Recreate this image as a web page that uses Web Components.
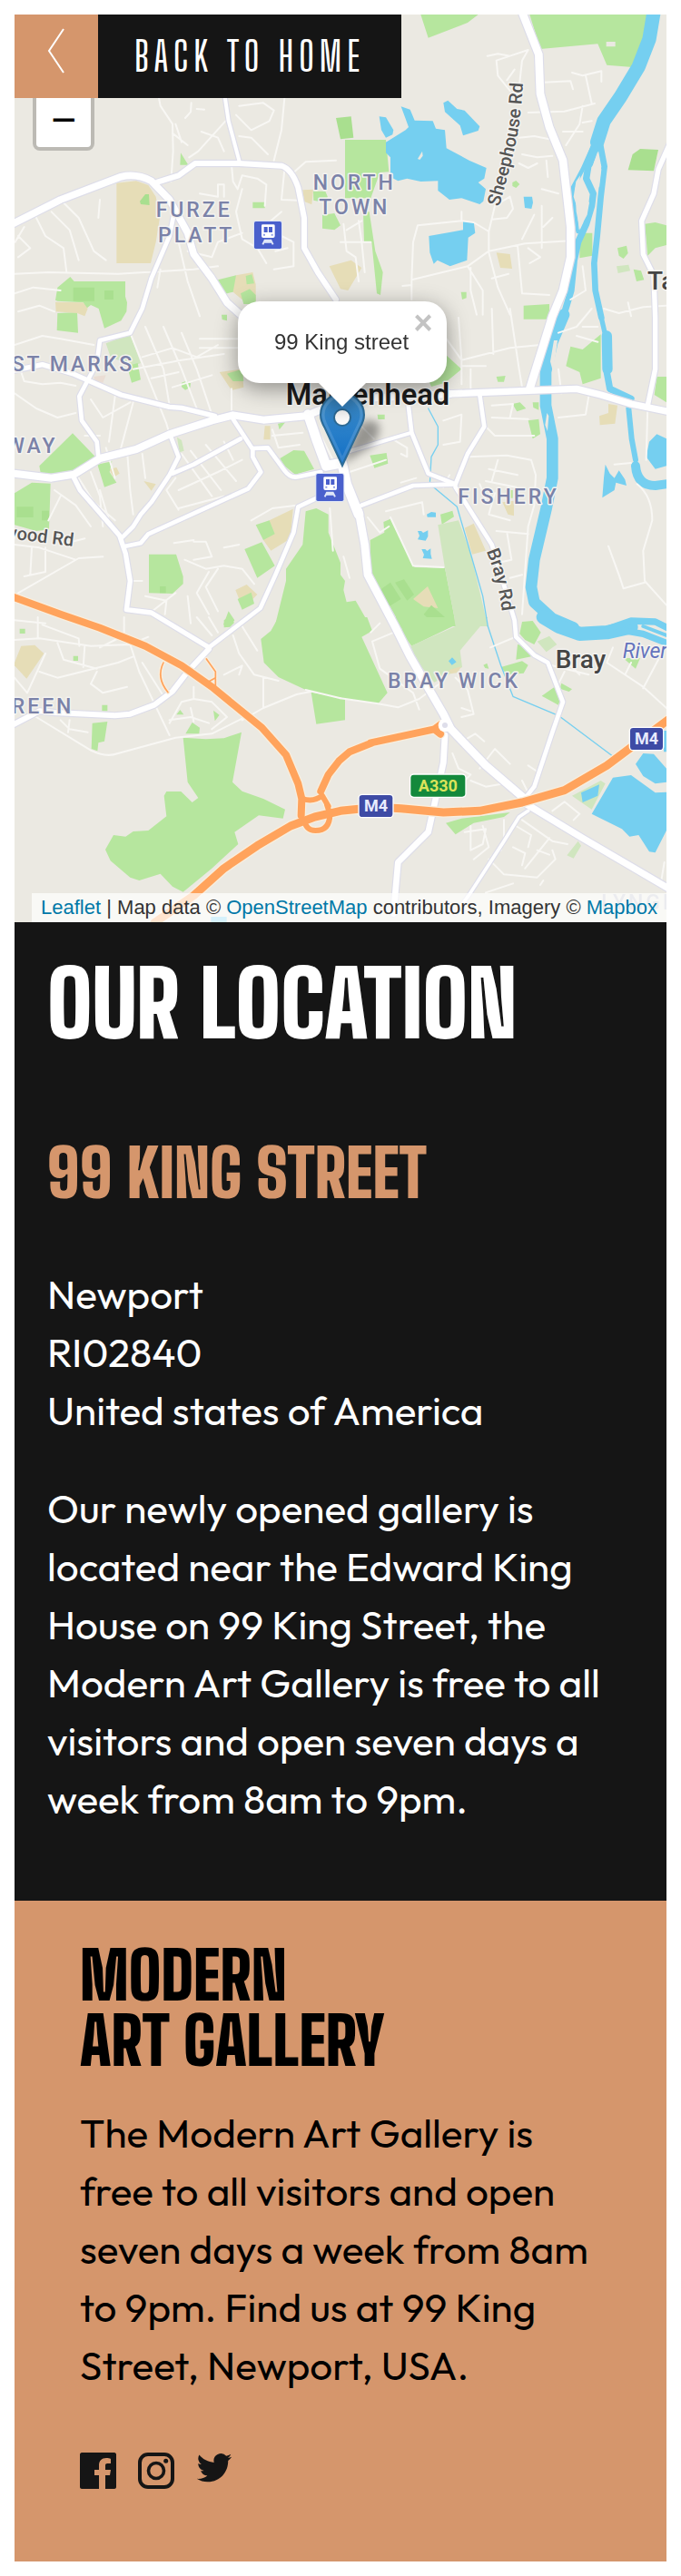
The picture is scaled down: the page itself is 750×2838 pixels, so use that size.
<!DOCTYPE html>
<html lang="en">
<head>
<meta charset="utf-8">
<meta name="viewport" content="width=device-width, initial-scale=1">
<title>Modern Art Gallery – Our location</title>
<style>
  :root {
    --ink: #151515;
    --accent: #d5966c;
    --display: "Big Shoulders Display", "Big Shoulders", "Liberation Sans Narrow", sans-serif;
    --body: "Outfit", Lato, sans-serif;
  }
  body { margin: 16px; background: #fff; font-family: "Outfit", Lato, sans-serif; }
</style>
</head>
<body>
<location-page></location-page>

<script>
/* Map geometry is kept in tiles; each tile has its own origin in map units (3 units = 1px). */
const TILES = { A: [0, 0], B: [1125, 0], C: [0, 1020], D: [1125, 1020], E: [0, 2040], F: [1125, 2040] };
const at = (t, body) => `<g transform="translate(${TILES[t][0]} ${TILES[t][1]})">${body}</g>`;

const AREAS = [
  ['green', 'A', 'M183 992L190 950 232 915 245 930 414 930 414 980 420 1000 418 1030 400 1060 345 1085 326 1020 300 1008 285 1020 275 1000 190 995ZM190 1035L255 1032 258 1100 188 1092ZM597 505L622 545 595 545ZM835 668h40v20h-40zM1035 632l40 0 8 20-25 15-22-5zM1065 710l40-5 20 40-20 15-40-5zM720 925L780 910 795 945 770 965 730 975Z'],
  ['tan', 'A', 'M385 605L450 598 490 612 515 650 528 720 515 800 498 870 385 870ZM1000 628l35-2-5 50-25-10zM780 910L835 900 845 940 845 995 800 990 770 965ZM1088 880L1160 860 1195 885 1150 960 1125 955ZM183 998L275 1000 290 1020 280 1045 255 1035 185 1030Z'],
  ['green', 'A', 'M812 912l20-5 8 30-25 3zM795 970l30-15 20 20 0 30-40 0z'],
  ['dark', 'A', 'M462 665L480 642 492 642 494 678 465 675ZM242 950h70v45h-70zM345 960h30v30h-30zM1110 390L1160 385 1168 455 1125 460Z'],
  ['green', 'B', 'M265 48L455 48 420 75 290 125ZM625 48H1012L1000 150 965 222 880 215 850 145 660 162ZM15 462L150 462 160 568 130 570 100 655 15 655ZM75 700L95 700 115 830 140 900 132 975 120 970 103 800 78 800ZM1005 740L1040 735 1077 745V810L1040 820 1015 845ZM915 820l30-8 5 25-15 18-15-10zM968 890l25 5 10 30-25 5zM790 770h42v75l-42 8zM605 1010L690 1005 690 1055 605 1055ZM568 603l12-6 12 12-12 12-12-6zM398 965l18 0 0 20-14 5z'],
  ['dark', 'B', 'M950 562L965 510 990 492 1050 495 1035 565Z'],
  ['pale', 'B', 'M912 880l40-5 5 20-40 8z'],
  ['tan', 'B', 'M515 835L560 840 567 888 528 885Z'],
  ['water', 'B', 'M150 470L215 430 225 420 200 352 230 362 245 398 305 400 315 425 345 430 350 490 425 530 482 555 475 590 455 603 480 625 472 665 460 675 400 655 360 660 322 630 322 598 265 600 220 590 190 598 165 585 165 520 150 505ZM128 385L150 388 175 430 172 445 150 455 135 430ZM340 340L355 332 385 360 410 365 460 418 455 432 405 448 395 415 345 370ZM292 780L405 760 405 732 440 732 445 770 422 785 418 860 362 880 320 860 308 872 295 835ZM605 650h28l3 20-5 20-22-3z'],
  ['land', 'B', 'M255 525L270 500 272 515 262 528ZM878 138h30v16h-30z'],
  ['pale', 'C', 'M350 115L430 85 465 180 440 190 365 160ZM585 425l15 10 8 35-15 5z'],
  ['pink', 'C', 'M310 225l40-5-10 25-25 0z'],
  ['tan', 'C', 'M725 210L800 200 805 260 765 270ZM360 530l25-5 10 20-20 12zM475 570L515 580 500 602ZM890 700L968 662 960 760 895 800 870 765ZM778 930L815 912 850 945 830 965 790 960ZM875 388h18v45h-22z'],
  ['green', 'C', 'M420 190L455 180 465 235 435 245ZM600 245l15-6 15 8-2 14-16 8-12-10zM750 215L800 200 805 240 770 240ZM130 520L240 412 315 490 240 540 135 548ZM322 515L370 505 362 540 385 575 345 590ZM48 610L105 575 167 578 162 730 120 735 48 715ZM492 812H582L605 885 605 910 570 942 492 940ZM845 715L890 700 908 745 870 765ZM808 795L865 772 908 850 850 890ZM785 960L830 938 840 975 800 995ZM738 1045L755 1000 775 1030 760 1050ZM925 495L970 468 1005 470 1038 530 975 548 940 520ZM1010 670L1045 660 1085 680 1085 740 1125 840 1125 1050 908 1050 945 900 945 860 1000 780ZM918 380l25-5-20 25zM732 20l18 0 0 20-16-4z'],
  ['dark', 'C', 'M55 655h55v35h-55zM138 668h24v32h-24zM528 918h20v22h-20z'],
  ['green', 'D', 'M745 190L760 125 800 135 860 85 860 230 800 250 790 210ZM1045 225h32v85l-40-25zM620 370l35-5 5 50-25 15zM568 315l25-5 20 20-30 10zM635 310h20v25l-18-8zM515 225l30-3-5 20-20 0zM97 485l55-8 5 35-45 15zM98 765L145 740 142 705 165 695 245 855 345 857 382 1050 200 1050 150 960 100 880ZM330 680l40-12 5 20-40 25zM345 150L400 200 370 225 345 245 300 258 290 235 340 190ZM0 880L15 900 10 930 20 970 50 965 90 1035 0 1035ZM122 350h24v16h-22zM545 600h24v26h-22z'],
  ['pale', 'D', 'M322 715L390 700 430 810 487 1050 382 1050 345 857Z'],
  ['tan', 'D', 'M410 725L440 710 480 800 435 812ZM240 960L288 918 322 990 275 985ZM855 355l30-10 0-30 30 5-8 60-50 5zM535 640l38-5 0 50-20-5z'],
  ['dark', 'D', 'M130 930L165 905 200 960 160 985ZM180 905L210 895 243 945 220 965ZM275 1010L300 980 345 1020 310 1045Z'],
  ['water', 'D', 'M1020 440L1045 415 1077 430V520L1040 530 1010 490ZM875 515L890 545 905 560 920 535 940 565 945 585 910 575 905 600 865 625 870 560ZM285 680l15-8 15 2 0 15-28 0zM255 735h12l6 6 16-8v20l-8 14-26-4 6-12zM268 795h12l6 6 12-8v18l4 16-30-2 4-12z'],
  ['green', 'E', 'M920 0H1127V268L1010 240 920 198 872 150 862 72 895 45ZM1028 248L1140 268V340L1045 353ZM605 398L680 403 740 400 798 380 768 545 800 575 870 600 942 635 935 665 855 655 775 710 787 750 700 830 605 908 570 890 530 848 460 870 430 860 365 805 348 768 375 720 415 725 440 708 490 705 550 658 542 590 550 576 598 576 635 612 655 597 620 545ZM65 38h18v16h-18zM242 128h16v16h-16zM337 290h18v20h-18zM305 350L355 345 345 410 325 415 322 442 302 435ZM613 385L635 348 660 365 658 385ZM583 322l12-16 12 16zM705 308l20 15-15 20zM740 10l18-12 16 20-14 14-20 2z'],
  ['tan', 'E', 'M48 150L70 95 115 92 145 120 88 203 48 160Z'],
  ['water', 'E', 'M697 990h52v20h-52z'],
  ['green', 'F', 'M0 0H88L105 45 70 65 155 250 125 285 0 268ZM165 0L375 0 382 25 235 95ZM600 15L635 12 662 50 640 90 610 75 592 55ZM585 90l25 5 20 35-50 10zM530 165L600 145 620 158 605 185 550 190ZM665 260L715 225 732 250 720 290ZM730 218l35 20-10 8-30-10zM348 680L400 665 560 645 540 660 440 680 380 718ZM940 135l50 0-15 35-35-30zM472 158l12-6 6 18-12-2z'],
  ['pale', 'F', 'M232 95L380 30 375 0 487 0 395 110 402 165 310 215 255 150ZM650 80L690 62 715 90 680 115ZM765 590L860 540 875 550 830 635 800 615ZM785 740l10 15-25 42-22-10z'],
  ['tan', 'F', 'M358 175l40-12-10 20-25 4z'],
  ['water', 'F', 'M830 650L900 530 960 522 1040 580 1077 578V705L1040 778 1020 775 985 720 955 725 930 700ZM975 485L1000 450 1035 452 1077 500V545L1040 550 1000 525ZM795 580L855 553 850 590 800 612ZM1068 375h9v70h-9zM357 145l12-12 14 15-15 10z'],
];

const RIVERS = [
  ['B', 46, 'M1035 40L1020 130 985 220 925 320 870 400 848 470'],
  ['B', 14, 'M840 470L800 560 768 620 772 700 785 765'],
  ['B', 30, 'M848 470L820 540'], ['B', 22, 'M820 540L812 590 835 640 830 680 812 740 785 800 772 860 762 960 735 1050'],
  ['B', 20, 'M855 460L872 550 860 650 848 780 838 870 842 960 862 1050'],
  ['D', 38, 'M738 20L700 110 678 210 678 320 700 430 700 560 680 660 640 830 630 920 640 970 700 1025 770 1055'],
  ['F', 46, 'M670 0L720 30 790 55 880 50 960 32'], ['F', 22, 'M880 40L960 12 1040 15 1090 40'], ['F', 22, 'M940 45L1000 55 1090 90'],
  ['F', 12, 'M1000 30L1077 60'],
  ['D', 16, 'M855 0L880 110'], ['D', 34, 'M880 90L882 200'], ['D', 22, 'M878 200L890 265 960 298'],
  ['D', 18, 'M952 330L962 430 975 500'], ['D', 30, 'M975 520Q980 585 1040 585L1090 578'],
  ['D', 4, 'M290 330L322 390 322 450 300 490 295 580 385 655 430 810 470 950 487 1050'],
  ['F', 4, 'M487 30L530 160 570 262 720 325 900 460'],
];
const ISLES = [['B', 'M850 500L862 560 855 620 838 590 836 540ZM792 580L785 640 780 680 770 650 778 600ZM800 640L822 670 815 710 788 760 782 700Z'], ['D', 'M705 105l12 0-8 60-8 40-8-30zM682 345l6 10-4 50-8-20z']];

/* Side streets */
const STREETS = [
  ['A', 'M525 324L530 350 570 410 572 500 565 600M745 400L655 500 625 520M580 410L600 470M570 440L620 480M665 435L720 455 740 500M632 340L630 370 612 390M650 360L675 362M790 350L870 340 905 365 890 400 830 430 800 400 780 380M940 324L930 430 905 530M790 450L830 455 885 510M765 545L770 600 785 625 800 580 850 590 880 610 875 680M800 625L780 700 800 790 850 820 880 870M905 890L970 880 970 800 930 780M940 560L930 660 985 662M970 570L1010 535 1110 530M48 905L160 900 390 905 640 890 720 880M110 700L150 780 210 820 220 900M60 780L100 820 60 850M200 660L260 720 310 830 350 860M170 700L230 760 260 860M330 660L325 720M590 800L620 930 660 1045M620 830L700 850 720 800 800 770M530 890L520 950M660 640L720 650 720 610 740 610 740 650M48 970L110 950 200 960M60 1030L130 1010 180 1030M80 750L50 800M860 760L930 700M910 830L950 820'],
  ['B', 'M485 185L520 178 560 185 620 165 600 200 590 290M560 185L515 200 520 250 560 300M575 230L550 265M670 272L760 268 768 295M765 240L800 250 862 235 862 270M810 250L830 342M620 372L740 368 840 342M800 350L790 410 745 480M735 435L800 435M800 405L830 400M590 455L640 450 690 460M600 510L650 520 700 515M680 530L685 585M665 625L720 640M590 540L620 555 650 540M235 925L240 800 255 745 400 730 440 735 490 765 510 680 560 650 570 690 550 720 500 725M490 765L490 830 420 880 235 925M490 830L610 805 770 795M420 880L470 960 470 1040M430 885L430 960 450 1040M490 835L520 950 560 1040M585 810L600 970 690 975M665 680L665 820M640 710L600 790M620 820L660 850 625 870M700 720L670 750M10 740L20 830 50 850 60 930M60 730L70 800 80 900M20 760L70 730M0 800L100 800M870 1020L920 1035 1000 1015 1075 1010M800 880L810 960 760 990M950 1000L960 1045M400 700L400 730M500 920L555 905M235 930L235 990M205 945L235 942'],
  ['C', 'M48 120L140 90 200 100 310 120M60 180L80 240 140 250 200 245 250 255M48 280L120 330 190 360 250 345M430 80L490 230 550 380 560 415M480 60L540 200 560 320M540 60L600 200 650 330M600 80L650 200 700 350M470 160L570 130 650 160 720 120M440 200L600 170 740 150M660 100L790 100M660 130L800 130M570 260L700 220M500 230L590 210M765 265L765 340M380 290L360 440M440 310L400 460M300 300L340 360 430 310M280 420L330 420M420 470L430 600 440 680M470 480L480 560M600 480L700 620M630 470L730 600M680 450L780 570M590 600L720 540 800 500M590 660L740 620M580 560L550 600 590 665M300 540L330 620 340 720M260 560L310 640 380 700M180 600L250 650 300 720M330 600L360 700M48 780L130 790 250 830M60 940L260 825 340 820M105 790L100 880M150 790L150 870 80 885M640 770L680 770 700 820 640 830M575 775L640 765M610 830L680 860 740 850 800 860 840 910M690 870L650 940 690 1010M720 860L680 920 720 1000M620 950L630 1040M490 1010L580 940M430 900L470 900M830 700L900 660 980 650M740 790L790 780M900 400L920 460 990 450M900 420L1000 410M740 440L770 500M350 460L380 560M1090 660L1100 800M1050 400L1100 500M480 950L550 965 545 1010M48 1030L150 1040M200 620L160 700M280 760L200 780'],
  ['D', 'M390 30L400 170 400 250M350 100L400 170 560 130 660 120M500 0L505 150M560 0L590 200 600 260M400 190L480 190M430 270L430 200M340 370L400 350 395 440 340 450M500 320L570 315 560 360M500 360L620 365M480 390L510 420 640 420M420 490L550 485 630 500 645 550 640 650 620 720 600 1010M490 530L585 550M480 570L580 590M460 580L480 630M520 500L500 570M510 610L490 680 560 700M515 735L620 745M550 740L565 830 520 840M560 890L600 880M905 515L960 510M980 580Q1030 620 1030 700L1000 800 1005 900 1077 980M1005 905L935 925 920 880 885 785M1015 320L1010 500M720 360L810 350 820 290M720 200L730 280M720 80L780 60 830 0M30 540L150 500M170 430L220 460 220 490 200 480M200 575L250 560M165 690L240 850 340 855M150 670L270 640 275 680M90 690L130 740 160 720M10 820L30 890M340 590L360 550M60 380L110 430M780 90L850 110M800 60L850 60'],
  ['E', 'M48 75L130 70 300 95 430 90 490 65M125 0L125 70M140 25L260 70 262 95M410 0L410 60 330 100M190 85L210 140 320 170M130 180L190 200 390 150 440 130M280 95L275 165M430 90L460 180 560 390M470 150L540 260M320 180L300 220 340 250 420 230M90 250L150 120M48 200L90 250M120 330L300 440Q350 465 390 450L580 398 700 385 800 335M200 340L230 370 290 380M230 340L225 380M640 230L640 270 600 280 560 350M640 270L700 280 750 330 700 370M560 340L630 330 690 350M630 300L640 345M770 60L790 120 840 190 920 210M800 30L850 110M870 200L870 300 980 255 1030 245M740 190L800 160 790 190M870 300L800 340M650 0L700 60M690 0L720 50M1010 240L1125 268'],
  ['F', 'M0 268L120 285 190 298 260 270 340 210M105 80L200 40M105 80L130 170 240 250 260 305M130 20L100 50M495 100L590 60M380 200L420 240 440 320 400 330M400 300L430 310M420 400L445 385 475 410M370 450L390 500 430 520 400 550M460 500L510 435 560 485M430 540L480 560 540 550M600 540L620 580M620 490L650 510M740 180L720 220M700 160L820 190M750 150L790 190M880 150L1000 230 1077 300M900 100L880 150M1000 235L1050 140M940 190L960 150M430 690L430 770 470 750 480 700 410 710M470 690L490 760 440 800M540 670L540 730M580 690L630 720 620 760M600 670L700 740 750 750M690 730L610 830M490 800L540 850 650 860 710 800 700 770M570 760L610 780 600 820M500 790L530 770M650 770L690 785M700 640L740 610 790 650 770 670M670 870L660 885M1070 810L1060 870M480 910L570 880'],
];

/* Main roads: tile, width, path */
const ROADS = [
  ['A', 12, 'M740 300L755 400 790 530'],
  ['A', 14, 'M578 690L560 780 500 920 470 1020 430 1100 330 1125 320 1200'],
  ['A', 18, 'M520 602L590 580 645 540 790 540 930 548Q965 560 985 620L1005 720 1005 820 1050 900 1110 990'],
  ['A', 23, 'M30 746L200 660 400 584Q450 572 500 598L560 660 620 770 640 840 700 920 750 1000 800 1045'],
  ['B', 16, 'M1090 470L1050 560 1035 640 995 730 1000 840 1035 910 1040 1050 1040 1220 1015 1340'],
  ['B', 26, 'M600 40L655 180 660 310 690 420 735 530 760 750 760 850 735 960 700 1045 625 1285'],
  ['C', 14, 'M320 180L262 290 270 370 320 440 325 490'],
  ['C', 16, 'M30 208L140 185 240 215 400 285 560 325 600 328 710 355'],
  ['C', 14, 'M770 365L835 465 835 490 862 540 820 595 490 745 465 775 415 785'],
  ['C', 14, 'M835 462L885 460 940 535Q960 562 985 556L1060 540'],
  ['C', 14, 'M565 425L590 490 560 550 500 640 465 680 440 720 405 755'],
  ['C', 14, 'M570 545L640 515 795 430'],
  ['C', 16, 'M242 555L265 600 395 750 415 810 430 900 418 995 500 1005 690 1120'],
  ['C', 14, 'M1060 620L985 655 970 740 910 880 860 990 690 1120'],
  ['E', 18, 'M690 105L620 180 570 245 510 290 430 320 380 325 180 315 130 310 30 362'],
  ['C', 24, 'M30 543L170 560 245 548 330 495 450 465 560 415 700 370 770 352 870 368 1010 355 1140 300 1330 290 1485 282'],
  ['D', 22, 'M350 282L600 272 780 265 860 285 960 315 1090 342'],
  ['D', 14, 'M222 300L235 410 290 545 380 580'], ['D', 12, 'M235 410L50 465 0 480'],
  ['D', 14, 'M460 285L475 390 420 480 380 580 240 585 70 650'],
  ['D', 14, 'M380 590L500 780 575 1030 580 1085 640 1145 685 1170 735 1300 700 1400 640 1580 600 1630'],
  ['C', 32, 'M1018 350L1045 430 1078 520 1130 510 1145 580 1185 680'],
  ['D', 26, 'M60 670L80 780 90 880 180 1050 230 1150 340 1340 365 1390 480 1510 620 1630'],
  ['F', 20, 'M345 390L340 480 310 620 290 710 190 810 175 980'],
  ['F', 11, 'M620 640L590 660 540 740 430 910 380 980'],
  ['F', 22, 'M610 615L800 730 1090 900'],
];
const MOTORWAYS = [
  ['E', 5, 'M540 150Q515 200 555 248'], ['E', 5, 'M682 138L712 180 712 232M685 215L712 200'],
  ['E', 18, 'M1000 600Q1035 612 1065 590L1085 625M1005 668Q1010 705 1042 705 1090 705 1090 650L1080 620'],
  ['E', 24, 'M30 -72L200 -10 330 35 480 95 600 160 700 230 865 365 945 455 985 550 997 600 995 655'],
  ['E', 24, 'M1230 415L1155 445 1120 475 1085 520 1060 575M1225 415L1435 370 1455 355M1435 370L1455 386'],
  ['E', 27, 'M510 1010L640 920 740 830 850 755 960 690 1040 660 1125 640 1245 628 1325 632 1465 645 1585 640 1725 612 1865 572 2005 490 2085 430 2220 330'],
];
const COLOURS = { green: '#b6e69e', dark: '#a9df8f', pale: '#d0e6bf', tan: '#e6ddb7', pink: '#eaddd4', water: '#75cff0', land: '#ebe9e2' };

const train = (t, x, y) => at(t, `<g transform="translate(${x} ${y})"><rect x="-3" y="-3" width="96" height="96" rx="8" fill="#dfe6f6"/><rect width="90" height="90" rx="5" fill="#4a60cc"/><path d="M28 10h36q4 0 4 4v34q0 6-6 6H30q-6 0-6-6V14q0-4 4-4z" fill="#fff"/><path d="M32 18h12v18H32zM48 18h12v18H48z" fill="#4a60cc"/><path d="M30 44h6M56 44h6" stroke="#8fa0e6" stroke-width="6"/><path d="M28 76l7-14h20l7 14M32 68h26" stroke="#dfe6f8" stroke-width="6" fill="none"/></g>`);
const shield = (t, x, y, w, fill, ink, text) => at(t, `<rect x="${x - 4}" y="${y - 4}" width="${w + 8}" height="80" rx="14" fill="#fff"/><rect x="${x}" y="${y}" width="${w}" height="72" rx="10" fill="${fill}"/><text x="${x + w / 2}" y="${y + 55}" text-anchor="middle" class="shield" fill="${ink}">${text}</text>`);
const label = (t, cls, x, y, text) => at(t, `<text class="${cls}" x="${x}" y="${y}">${text}</text>`);

customElements.define('map-canvas', class extends HTMLElement {
  connectedCallback() {
    const strokes = (list, colour, extra) => list.map(([t, w, d]) => at(t, `<path d="${d}" stroke="${colour}" stroke-width="${w + extra}"/>`)).join('');
    this.attachShadow({ mode: 'open' }).innerHTML = `
      <style>
        :host { display: block; overflow: hidden; background: #ebe9e2; }
        svg { display: block; width: 100%; height: 100%; }
        .lines { fill: none; stroke-linecap: round; stroke-linejoin: round; }
        text { font-family: Roboto, sans-serif; paint-order: stroke; stroke: #f4f3f0; stroke-width: 9px; stroke-linejoin: round; }
        .area { font-size: 69px; letter-spacing: 9px; fill: #7b82a8; font-weight: 500; }
        .faint { opacity: .4; stroke: none; }
        .road { font-size: 60px; fill: #555; font-weight: 500; }
        .town { font-size: 84px; fill: #454545; font-weight: 500; }
        .city { font-size: 98px; fill: #1c1c1c; font-weight: 600; }
        .river { font-size: 69px; fill: #6473bd; font-style: italic; }
        .shield { font-size: 54px; font-weight: 700; stroke: none; }
      </style>
      <svg viewBox="48 48 2154 3000" preserveAspectRatio="xMidYMid slice" role="img" aria-label="Street map of Maidenhead">
        ${AREAS.map(([k, t, d]) => at(t, `<path fill="${COLOURS[k]}" d="${d}"/>`)).join('')}
        <g class="lines">${strokes(RIVERS, '#75cff0', 0)}</g>
        ${ISLES.map(([t, d]) => at(t, `<path fill="#ebe9e2" d="${d}"/>`)).join('')}
        <g class="lines">
          ${STREETS.map(([t, d]) => at(t, `<path d="${d}" stroke="#f8f7f4" stroke-width="6"/>`)).join('')}
          ${strokes(ROADS, '#dddde9', 7)}
          ${strokes(ROADS, '#ffffff', 0)}
          ${strokes(MOTORWAYS, '#f9eedd', 8)}
          ${strokes(MOTORWAYS, '#ffa35c', 0)}
        </g>
        ${at('F', '<circle cx="345" cy="357" r="22" fill="#fff"/><circle cx="345" cy="357" r="9" fill="#dedeea"/>')}
        ${label('A', 'area', 515, 718, 'FURZE')}${label('A', 'area', 522, 800, 'PLATT')}
        ${label('A', 'area', 1034, 628, 'NORTH')}${label('A', 'area', 1054, 709, 'TOWN')}
        ${label('C', 'area', 38, 208, 'ST MARKS')}${label('C', 'area', 20, 478, 'WAY')}
        ${label('D', 'area', 388, 646, 'FISHERY')}${label('E', 'area', 38, 318, 'REEN')}
        ${label('F', 'area', 156, 234, 'BRAY WICK')}${label('F', 'area faint', 862, 966, 'LYNGF')}
        ${label('C', 'city', 944, 318, 'Maidenhead')}
        ${label('F', 'town', 710, 168, 'Bray')}${label('B', 'town', 1014, 958, 'Ta')}
        ${label('F', 'river', 932, 135, 'River')}
        ${at('C', '<text class="road" transform="translate(10 757) rotate(7)">wood Rd</text>')}
        ${at('B', '<path id="sheep" fill="none" d="M524 684Q560 560 580 470T606 200"/><text class="road"><textPath href="#sheep">Sheephouse Rd</textPath></text>')}
        ${at('D', '<path id="brayrd" fill="none" d="M482 802Q530 920 540 1060"/><text class="road"><textPath href="#brayrd">Bray Rd</textPath></text>')}
        ${train('A', 840, 732)}${train('C', 1045, 546)}
        ${shield('F', 62, 588, 110, '#3e4ba5', '#e8ebff', 'M4')}
        ${shield('F', 957, 366, 108, '#3e4ba5', '#e8ebff', 'M4')}
        ${shield('F', 232, 521, 180, '#14893c', '#dbe35a', 'A330')}
      </svg>`;
  }
});

customElements.define('map-marker', class extends HTMLElement {
  connectedCallback() {
    this.attachShadow({ mode: 'open' }).innerHTML = `
      <style>:host { display: block; width: 50px; height: 82px; } svg { display: block; overflow: visible; }</style>
      <svg width="50" height="82" viewBox="0 0 50 82" aria-hidden="true">
        <defs>
          <linearGradient id="pin" x1="0" y1="0" x2="0" y2="1"><stop offset="0" stop-color="#4090cc"/><stop offset="1" stop-color="#126fc6"/></linearGradient>
          <filter id="soft" x="-30%" y="-30%" width="160%" height="160%"><feGaussianBlur stdDeviation="5"/></filter>
        </defs>
        <path d="M24 80L38 46Q48 24 64 34 70 44 56 60Z" fill="#000" opacity=".36" filter="url(#soft)"/>
        <path d="M25 1C12 1 1 12 1 25c0 5 2 10 5 15l19 41 19-41c3-5 5-10 5-15C49 12 38 1 25 1z" fill="url(#pin)" stroke="#2e6c97" stroke-width="2"/>
        <path d="M25 4C14 4 4 14 4 25c0 5 2 9 4 13l17 36 17-36c2-4 4-8 4-13C46 14 36 4 25 4z" fill="none" stroke="#fff" stroke-opacity=".13" stroke-width="3"/>
        <circle cx="25" cy="28" r="9" fill="#fff" stroke="#2e6c97" stroke-width="2"/>
      </svg>`;
  }
});

customElements.define('map-popup', class extends HTMLElement {
  connectedCallback() {
    this.attachShadow({ mode: 'open' }).innerHTML = `
      <style>
        :host { display: flex; flex-direction: column; align-items: center; font: 24px/34px "Liberation Sans", Arial, sans-serif; color: #333; filter: drop-shadow(0 6px 12px rgba(0,0,0,.4)); }
        .box { position: relative; box-sizing: border-box; min-width: 230px; padding: 28px 40px; border-radius: 24px; background: #fff; white-space: nowrap; }
        .tip { width: 52px; height: 26px; background: #fff; clip-path: polygon(0 0, 100% 0, 50% 100%); }
        button { position: absolute; top: 6px; right: 8px; width: 36px; height: 36px; padding: 0; border: 0; background: none; color: #c3c3c3; font: bold 36px/36px "Liberation Sans", Arial, sans-serif; }
      </style>
      <div class="box"><slot></slot><button type="button" aria-label="Close popup">×</button></div>
      <div class="tip"></div>`;
  }
});

customElements.define('map-view', class extends HTMLElement {
  connectedCallback() {
    this.attachShadow({ mode: 'open' }).innerHTML = `
      <style>
        :host { display: block; position: relative; height: 1000px; overflow: hidden; font-family: "Liberation Sans", Arial, sans-serif; }
        map-canvas { height: 100%; }
        .zoom { position: absolute; left: 20px; top: 20px; display: grid; gap: 2px; border: 4px solid rgba(0,0,0,.2); border-radius: 8px; background: #ccc; background-clip: padding-box; overflow: hidden; }
        .zoom button { width: 60px; height: 60px; padding: 0; border: 0; background: #fff; color: #000; font: 48px/60px "Liberation Sans", Arial, sans-serif; }
        .pin { position: absolute; left: 50%; top: 416px; transform: translateX(-23px); }
        .popup { position: absolute; left: 50%; top: 316px; transform: translateX(-113px); }
        .credit { position: absolute; right: 0; bottom: 0; padding: 0 10px; font-size: 22px; line-height: 32px; color: #333; background: rgba(255,255,255,.7); white-space: nowrap; }
        .credit a { color: #0078a8; text-decoration: none; }
      </style>
      <map-canvas></map-canvas>
      <div class="zoom"><button type="button" aria-label="Zoom in"></button><button type="button" aria-label="Zoom out">−</button></div>
      <map-marker class="pin"></map-marker>
      <map-popup class="popup"><slot></slot></map-popup>
      <div class="credit"><a href="https://leafletjs.com">Leaflet</a> | Map data © <a href="https://www.openstreetmap.org/">OpenStreetMap</a> contributors, Imagery © <a href="https://www.mapbox.com/">Mapbox</a></div>`;
  }
});

customElements.define('back-link', class extends HTMLElement {
  connectedCallback() {
    this.attachShadow({ mode: 'open' }).innerHTML = `
      <style>
        :host { display: block; }
        a { display: flex; height: 92px; color: #fff; text-decoration: none; }
        .icon { display: grid; place-items: center; width: 92px; background: var(--accent); }
        .text { display: flex; align-items: center; padding: 0 40px; background: var(--ink); font: 500 44px/52px var(--display); letter-spacing: 6px; text-transform: uppercase; white-space: nowrap; }
      </style>
      <a href="#home">
        <span class="icon"><svg width="92" height="92" viewBox="0 0 92 92" fill="none" stroke="#fff" stroke-width="2" aria-hidden="true"><path d="M54 16L38 40 54 64"/></svg></span>
        <span class="text"><slot></slot></span>
      </a>`;
  }
});

customElements.define('location-info', class extends HTMLElement {
  connectedCallback() {
    this.attachShadow({ mode: 'open' }).innerHTML = `
      <style>
        :host { display: block; padding: 34px 36px 80px; background: var(--ink); color: #fff; font: 44px/64px var(--body); }
        h1 { margin: 0; font: 900 100px/112px var(--display); text-transform: uppercase; }
        h2 { margin: 88px 0 60px; font: 900 72px/84px var(--display); color: var(--accent); text-transform: uppercase; }
        address { font-style: normal; }
        p { margin: 44px 0 0; }
      </style>
      <h1>Our Location</h1>
      <h2>99 King Street</h2>
      <address>Newport<br>RI02840<br>United states of America</address>
      <p>Our newly opened gallery is<br>located near the Edward King<br>House on 99 King Street, the<br>Modern Art Gallery is free to all<br>visitors and open seven days a<br>week from 8am to 9pm.</p>`;
  }
});

const SOCIAL = {
  Facebook: '<path d="M38 0H2C1 0 0 1 0 2v36c0 1 1 2 2 2h19V25h-5v-6h5v-5c0-5 3-8 8-8 2 0 4 0 5 1v5h-3c-3 0-3 1-3 3v4h6l-1 6h-5v15h10c1 0 2-1 2-2V2c0-1-1-2-2-2z"/>',
  Instagram: '<rect x="2" y="2" width="36" height="36" rx="9" fill="none" stroke="currentColor" stroke-width="4"/><circle cx="20" cy="20" r="8.5" fill="none" stroke="currentColor" stroke-width="3.6"/><circle cx="30.700" cy="9.300" r="2.500"/>',
  Twitter: '<path transform="translate(0 -3.500)" d="M39.200 8.300c-1.400.6-2.900 1.100-4.500 1.300 1.600-1 2.900-2.500 3.500-4.300-1.500.9-3.200 1.500-5 1.900A7.900 7.900 0 0 0 19.700 14.400C13.200 14 7.400 10.900 3.400 6.100a7.900 7.900 0 0 0 2.400 10.500c-1.300 0-2.500-.4-3.500-1v.1c0 3.800 2.700 7 6.300 7.700-1.200.3-2.400.4-3.500.1a7.900 7.900 0 0 0 7.300 5.500A15.800 15.800 0 0 1 .7 32.300a22.300 22.300 0 0 0 12.100 3.500c14.600 0 22.800-12.300 22.400-23.400 1.600-1.100 2.900-2.500 4-4.100z"/>',
};
customElements.define('social-link', class extends HTMLElement {
  connectedCallback() {
    const name = this.getAttribute('name');
    this.attachShadow({ mode: 'open' }).innerHTML = `
      <style>:host { display: block; } a, svg { display: block; color: var(--ink); fill: currentColor; }</style>
      <a href="#${name.toLowerCase()}" aria-label="${name}"><svg width="40" height="40" viewBox="0 0 40 40" aria-hidden="true">${SOCIAL[name]}</svg></a>`;
  }
});

customElements.define('site-footer', class extends HTMLElement {
  connectedCallback() {
    this.attachShadow({ mode: 'open' }).innerHTML = `
      <style>
        :host { display: block; padding: 46px 72px 80px; background: var(--accent); color: #000; font: 44px/64px var(--body); }
        h2 { margin: 0 0 34px; font: 900 72px/72px var(--display); text-transform: uppercase; }
        p { margin: 0 0 64px; }
        nav { display: flex; gap: 24px; }
      </style>
      <h2>Modern<br>Art Gallery</h2>
      <p>The Modern Art Gallery is<br>free to all visitors and open<br>seven days a week from 8am<br>to 9pm. Find us at 99 King<br>Street, Newport, USA.</p>
      <nav aria-label="Social media"><social-link name="Facebook"></social-link><social-link name="Instagram"></social-link><social-link name="Twitter"></social-link></nav>`;
  }
});

customElements.define('location-page', class extends HTMLElement {
  connectedCallback() {
    this.attachShadow({ mode: 'open' }).innerHTML = `
      <style>
        :host { display: block; position: relative; }
        back-link { position: absolute; left: 0; top: 0; z-index: 2; }
      </style>
      <back-link>Back to home</back-link>
      <main><map-view>99 King street</map-view><location-info></location-info></main>
      <site-footer></site-footer>`;
  }
});
</script>
</body>
</html>
